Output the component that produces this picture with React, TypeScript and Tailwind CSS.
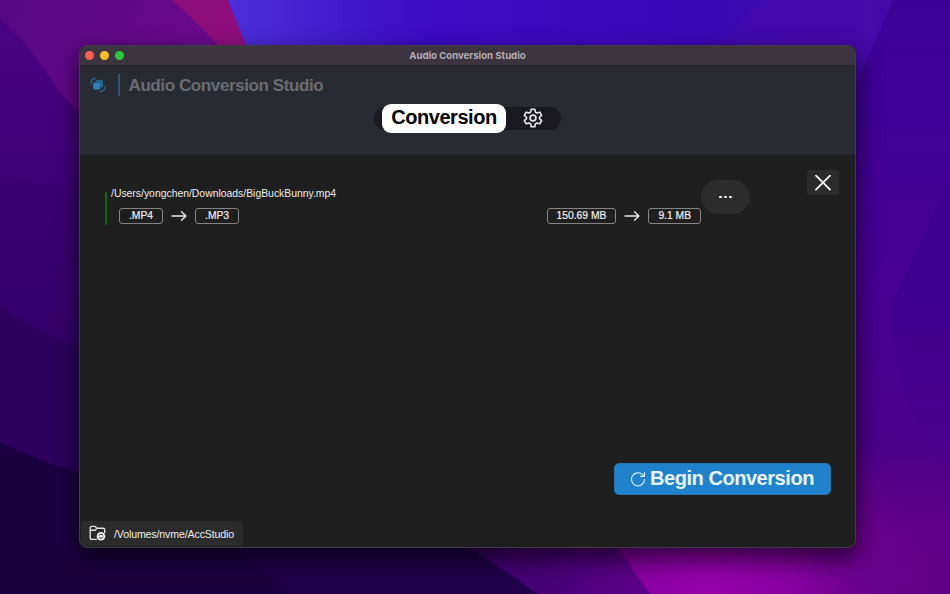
import type { ReactNode } from "react";

function Wallpaper() {
  return (
    <svg className="absolute inset-0 h-full w-full" viewBox="0 0 950 594" preserveAspectRatio="none">
      <defs>
        <linearGradient id="top" x1="230" y1="0" x2="880" y2="0" gradientUnits="userSpaceOnUse">
          <stop offset="0" stopColor="#4a2ed8" />
          <stop offset="0.3" stopColor="#3c0bc4" />
          <stop offset="0.7" stopColor="#3b06b6" />
          <stop offset="1" stopColor="#420aa8" />
        </linearGradient>
        <linearGradient id="left" x1="0" y1="0" x2="0" y2="480" gradientUnits="userSpaceOnUse">
          <stop offset="0" stopColor="#4c0283" />
          <stop offset="0.37" stopColor="#3f0278" />
          <stop offset="0.64" stopColor="#340068" />
          <stop offset="1" stopColor="#2c0060" />
        </linearGradient>
        <linearGradient id="leftTop" x1="0" y1="0" x2="200" y2="100" gradientUnits="userSpaceOnUse">
          <stop offset="0" stopColor="#550783" />
          <stop offset="1" stopColor="#6c0a8e" />
        </linearGradient>
        <linearGradient id="right" x1="0" y1="0" x2="0" y2="594" gradientUnits="userSpaceOnUse">
          <stop offset="0" stopColor="#3a0398" />
          <stop offset="0.5" stopColor="#480092" />
          <stop offset="0.75" stopColor="#4c008a" />
          <stop offset="0.9" stopColor="#600088" />
          <stop offset="1" stopColor="#600086" />
        </linearGradient>
        <radialGradient id="glow" cx="710" cy="600" r="220" gradientUnits="userSpaceOnUse">
          <stop offset="0" stopColor="#9800ac" />
          <stop offset="0.4" stopColor="#8600a0" />
          <stop offset="1" stopColor="#68008a" stopOpacity="0" />
        </radialGradient>
        <linearGradient id="bottom" x1="480" y1="0" x2="640" y2="0" gradientUnits="userSpaceOnUse">
          <stop offset="0" stopColor="#3a006c" />
          <stop offset="1" stopColor="#5c0088" />
        </linearGradient>
        <linearGradient id="edge" x1="0" y1="100" x2="0" y2="480" gradientUnits="userSpaceOnUse">
          <stop offset="0" stopColor="#38008e" stopOpacity="0" />
          <stop offset="0.4" stopColor="#38008e" />
          <stop offset="1" stopColor="#38008e" stopOpacity="0" />
        </linearGradient>
      </defs>
      <rect width="950" height="594" fill="url(#right)" />
      <path d="M0 0H260V480H0Z" fill="url(#left)" />
      <path d="M220 0H893L865 64L850 100H240Z" fill="url(#top)" />
      <path d="M760 0H893L865 64L715 45Z" fill="#480cab" opacity="0.35" />
      <path d="M0 0H180L235 60V190L79 112Q60 95 45 70Q25 40 0 20Z" fill="url(#leftTop)" />
      <path d="M172 0H228L260 80H250Q203 27 172 0Z" fill="#8d0e7b" />
      <path d="M0 178Q45 182 100 195V350H0Z" fill="#360070" opacity="0.5" />
      <path d="M0 306Q40 335 90 350V490H0Z" fill="#2c005c" />
      <path d="M0 442Q40 462 90 476L320 520V594H0Z" fill="#1b0041" />
      <path d="M210 530H480L540 594H292Q260 567 210 530Z" fill="#200049" />
      <path d="M440 530H640L660 594H537Q500 566 440 530Z" fill="url(#bottom)" />
      <path d="M605 530L650 594H950V370H605Z" fill="url(#glow)" />
      <path d="M950 180L893 300Q885 390 950 480Z" fill="url(#edge)" opacity="0.6" />
    </svg>
  );
}

function TitleBar() {
  return (
    <div className="grid h-5 shrink-0 grid-cols-3 items-center border-b border-[#242429] bg-[#3c353f]">
      <div className="flex gap-[5.5px] pl-[4.5px]">
        <span className="size-[9.5px] rounded-full bg-[#ff5f57]" />
        <span className="size-[9.5px] rounded-full bg-[#febc2e]" />
        <span className="size-[9.5px] rounded-full bg-[#28c840]" />
      </div>
      <p className="text-center font-[Inter] text-[9.6px] leading-none font-bold whitespace-nowrap text-[#b3adb5]">
        Audio Conversion Studio
      </p>
    </div>
  );
}

function LogoIcon() {
  return (
    <svg className="size-4" viewBox="0 0 16 16" fill="none">
      <rect x="5.9" y="2.8" width="7.2" height="7.4" rx="1.7" fill="#246594" />
      <rect x="3" y="5.3" width="7.4" height="7.4" rx="1.7" fill="#2e80b9" stroke="#29435a" strokeWidth="0.5" />
      <path d="M1 6.3V4.8Q1.5 2 5.2 1.3M15 9.8V11.2Q14.2 14 10.8 14.8" stroke="#286a98" strokeWidth="1.2" strokeLinecap="round" />
      <path d="M9.7 14.8l1.7-1.2" stroke="#286a98" />
    </svg>
  );
}

function GearIcon() {
  return (
    <svg className="size-[22px]" viewBox="0 0 24 24" fill="none" stroke="#e6e6ea" strokeWidth="1.8" strokeLinejoin="round">
      <path d="M10 2.5h4l.65 3.05 1.75 1.05 3-.95 2 3.5-2.3 2.05v1.6l2.3 2.05-2 3.5-3-.95-1.75 1.05L14 21.5h-4l-.65-3.05L7.6 17.4l-3 .95-2-3.5 2.3-2.05v-1.6L2.6 9.15l2-3.5 3 .95 1.75-1.05Z" />
      <circle cx="12" cy="12" r="3.2" />
    </svg>
  );
}

function Header() {
  return (
    <header className="h-[89px] shrink-0 border-b border-[#24272d] bg-[#282b32]">
      <div className="flex h-[38px] items-center pl-[10px]">
        <LogoIcon />
        <div className="ml-3 h-[22px] w-[1.5px] bg-[#345375]" />
        <h1 className="ml-[9px] pt-[2px] text-[17px] leading-5 font-bold tracking-[-0.4px] text-[#6b6c71]">Audio Conversion Studio</h1>
      </div>
      <nav className="flex justify-center">
        <div className="mt-[3px] flex h-[23px] w-[187px] items-center rounded-full bg-[#1a191f] pl-2">
          <button className="h-[29px] w-[124px] shrink-0 rounded-[9px] bg-white pb-[3px] text-[20px] leading-none font-bold tracking-[-0.45px] text-black">
            Conversion
          </button>
          <button className="ml-4 pb-px">
            <GearIcon />
          </button>
        </div>
      </nav>
    </header>
  );
}

function Tag({ children }: { children: ReactNode }) {
  return (
    <span className="flex h-4 items-center rounded-[3px] border border-[#858585] px-[9px] text-[10.3px] leading-none font-medium whitespace-nowrap text-[#f0f0f0] [-webkit-text-stroke:0.2px_#f0f0f0]">
      {children}
    </span>
  );
}

function Arrow() {
  return (
    <svg className="w-4 shrink-0" viewBox="0 0 16 12" fill="none" stroke="#ededed" strokeWidth="1.35" strokeLinecap="round" strokeLinejoin="round">
      <path d="M1 6h14M10.5 1.7L15 6l-4.5 4.3" />
    </svg>
  );
}

function FileRow() {
  return (
    <div className="flex w-[645px] items-start">
      <div className="mt-3 h-[33px] w-[2px] bg-[#0d650d]" />
      <div className="mt-[7px] ml-1 flex flex-1 flex-col">
        <p className="text-[10.4px] leading-[14px] text-[#eeeeee]">/Users/yongchen/Downloads/BigBuckBunny.mp4</p>
        <div className="mt-[7px] flex items-center pl-2">
          <Tag>.MP4</Tag>
          <div className="mx-2">
            <Arrow />
          </div>
          <Tag>.MP3</Tag>
          <div className="ml-auto flex items-center gap-2">
            <Tag>150.69 MB</Tag>
            <Arrow />
            <Tag>9.1 MB</Tag>
          </div>
        </div>
      </div>
      <button className="flex h-[34px] w-[49px] items-center justify-center gap-[2px] rounded-[17px] bg-[#2c2c2c]">
        <span className="size-[2.8px] rounded-full bg-white" />
        <span className="size-[2.8px] rounded-full bg-white" />
        <span className="size-[2.8px] rounded-full bg-white" />
      </button>
    </div>
  );
}

function FolderIcon() {
  return (
    <svg className="size-[17px]" viewBox="0 0 17 17" fill="none">
      <path d="M8 14.4H3Q1.2 14.4 1.2 12.5V3Q1.2 1.4 2.8 1.4H6L8 3.2H14Q15.7 3.2 15.7 5V8M1.5 5.2H6L8 3.2" stroke="#e2e2e2" strokeWidth="1.35" strokeLinejoin="round" />
      <circle cx="12" cy="11.2" r="4.3" fill="#efefef" />
      <path d="M9.7 10.8q.7-1.5 2.3-1.5 1.2 0 2 1M14.3 11.7q-.7 1.5-2.3 1.5-1.2 0-2-1" stroke="#333" />
    </svg>
  );
}

export default function App() {
  return (
    <main className="relative flex h-[594px] w-[950px] overflow-hidden bg-[#38007a] px-[79px] pt-[45px] pb-[45px] font-['Liberation_Sans',Arial,sans-serif]">
      <Wallpaper />
      <section className="relative flex h-[503px] w-[777px] flex-col overflow-hidden rounded-[8px] border border-[#423a44] bg-[#1f1f1f] shadow-[0_10px_22px_2px_rgba(0,0,0,0.6)]">
        <TitleBar />
        <Header />
        <div className="flex flex-1 flex-col">
          <div className="flex items-start justify-between pt-[15px] pr-[16px] pl-[25px]">
            <div className="pt-[10px]">
              <FileRow />
            </div>
            <button className="flex h-[25px] w-8 items-center justify-center rounded-[3px] bg-[#2c2c2c]">
              <svg className="size-4" viewBox="0 0 16 16" stroke="white" strokeWidth="1.7" strokeLinecap="round">
                <path d="M1 .7l14 14M15 .7l-14 14" />
              </svg>
            </button>
          </div>
          <div className="mt-auto flex justify-end pr-6">
            <button className="flex h-8 w-[217px] items-center rounded-[5px] border border-[#2476aa] bg-[#2082ca] pl-[15px] text-[#eaf6ff]">
              <svg className="size-4" viewBox="0 0 16 16" fill="none" stroke="#d9efff" strokeWidth="1.15" strokeLinecap="round" strokeLinejoin="round">
                <path d="M14.5 8.5a6.5 6.5 0 1 1-2-4.9L14.5 5.3M14.5 1.5v3.8h-4" />
              </svg>
              <span className="ml-1 pb-[3px] text-[20px] leading-none font-bold tracking-[-0.45px] whitespace-nowrap">Begin Conversion</span>
            </button>
          </div>
          <footer className="mt-[26px] mb-[1px] ml-[1px] flex h-[25px] w-[162px] items-center rounded-[4px] bg-[#2b2b2b] pl-2">
            <FolderIcon />
            <span className="ml-2 pt-[2px] text-[10.6px] leading-none tracking-[-0.13px] whitespace-nowrap text-[#eeeeee]">/Volumes/nvme/AccStudio</span>
          </footer>
        </div>
      </section>
    </main>
  );
}
